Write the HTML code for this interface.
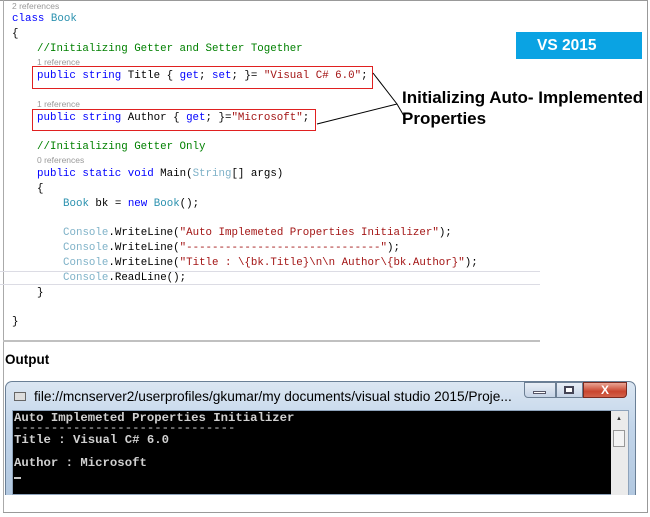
<!DOCTYPE html>
<html><head><meta charset="utf-8"><style>
*{margin:0;padding:0;box-sizing:border-box}
body{width:650px;height:517px;background:#fff;position:relative;overflow:hidden;font-family:"Liberation Sans",sans-serif}
.c{position:absolute;font-family:"Liberation Mono",monospace;font-size:10.8px;white-space:pre;color:#000;line-height:13px}
.r{position:absolute;font-family:"Liberation Sans",sans-serif;font-size:8.5px;color:#999;white-space:pre}
.k{color:#0000ff}.t{color:#2b91af}.s{color:#a31515}.g{color:#008000}.lt{color:#7fb2c8}
.box{position:absolute;border:1.5px solid #e02020}
.con{position:absolute;font-family:"Liberation Mono",monospace;font-size:12.3px;color:#d0d0d0;white-space:pre;line-height:12px;font-weight:bold}
</style></head><body>
<div style="position:absolute;left:0;top:0;width:648px;height:1px;background:#999"></div>
<div style="position:absolute;left:647px;top:0;width:1px;height:513px;background:#999"></div>
<div style="position:absolute;left:3px;top:0;width:1px;height:513px;background:#aaa"></div>
<div style="position:absolute;left:3px;top:512px;width:645px;height:1px;background:#999"></div>
<div style="position:absolute;left:0;top:271px;width:540px;height:1px;background:#dcdce4"></div>
<div style="position:absolute;left:0;top:284px;width:540px;height:1px;background:#dcdce4"></div>
<div style="position:absolute;left:3px;top:340px;width:537px;height:2px;background:#c0c0c0"></div>

<div class="r" style="left:12px;top:1px">2 references</div>
<div class="c" style="left:12px;top:13px"><span class="k">class</span> <span class="t">Book</span></div>
<div class="c" style="left:12px;top:28px">{</div>
<div class="c g" style="left:37px;top:43px">//Initializing Getter and Setter Together</div>
<div class="r" style="left:37px;top:57px">1 reference</div>
<div class="c" style="left:37px;top:70px"><span class="k">public</span> <span class="k">string</span> Title { <span class="k">get</span>; <span class="k">set</span>; }= <span class="s">"Visual C# 6.0"</span>;</div>
<div class="r" style="left:37px;top:99px">1 reference</div>
<div class="c" style="left:37px;top:112px"><span class="k">public</span> <span class="k">string</span> Author { <span class="k">get</span>; }=<span class="s">"Microsoft"</span>;</div>
<div class="c g" style="left:37px;top:141px">//Initializing Getter Only</div>
<div class="r" style="left:37px;top:155px">0 references</div>
<div class="c" style="left:37px;top:168px"><span class="k">public</span> <span class="k">static</span> <span class="k">void</span> Main(<span class="lt">String</span>[] args)</div>
<div class="c" style="left:37px;top:183px">{</div>
<div class="c" style="left:63px;top:198px"><span class="t">Book</span> bk = <span class="k">new</span> <span class="t">Book</span>();</div>
<div class="c" style="left:63px;top:227px"><span class="lt">Console</span>.WriteLine(<span class="s">"Auto Implemeted Properties Initializer"</span>);</div>
<div class="c" style="left:63px;top:242px"><span class="lt">Console</span>.WriteLine(<span class="s">"------------------------------"</span>);</div>
<div class="c" style="left:63px;top:257px"><span class="lt">Console</span>.WriteLine(<span class="s">"Title : \{bk.Title}\n\n Author\{bk.Author}"</span>);</div>
<div class="c" style="left:63px;top:272px"><span class="lt">Console</span>.ReadLine();</div>
<div class="c" style="left:37px;top:287px">}</div>
<div class="c" style="left:12px;top:316px">}</div>

<div class="box" style="left:32px;top:66px;width:341px;height:23px"></div>
<div class="box" style="left:32px;top:109px;width:284px;height:22px"></div>
<svg style="position:absolute;left:0;top:0" width="650" height="517"><polyline points="373,73 397,104 404,116" fill="none" stroke="#000" stroke-width="1"/><line x1="317" y1="124" x2="397" y2="104" stroke="#000" stroke-width="1"/></svg>

<div style="position:absolute;left:516px;top:32px;width:126px;height:27px;background:#0aa3e3;color:#fff;font-weight:bold;font-size:15.5px;line-height:27px;padding-left:21px">VS 2015</div>
<div style="position:absolute;left:402px;top:87px;font-weight:bold;font-size:17px;line-height:21px;color:#000;white-space:nowrap">Initializing Auto- Implemented<br>Properties</div>

<div style="position:absolute;left:5px;top:352px;font-weight:bold;font-size:13.5px">Output</div>

<div style="position:absolute;left:5px;top:381px;width:631px;height:114px;border:1px solid #6a7f96;border-bottom:none;border-radius:7px 7px 0 0;background:linear-gradient(#dbe6f2,#c2d5ea 40%,#b2c8e0)"></div>
<div style="position:absolute;left:14px;top:392px;width:12px;height:9px;background:#ddd;border:1px solid #666"></div>
<div style="position:absolute;left:34px;top:389px;font-size:13.7px;color:#000;white-space:pre">file://mcnserver2/userprofiles/gkumar/my documents/visual studio 2015/Proje...</div>
<div style="position:absolute;left:524px;top:382px;width:32px;height:16px;border:1px solid #6c7f94;border-radius:0 0 0 4px;background:linear-gradient(#e8eef6,#c6d4e6)"></div>
<div style="position:absolute;left:533px;top:391px;width:13px;height:3px;background:#fff;border:1px solid #556"></div>
<div style="position:absolute;left:556px;top:382px;width:27px;height:16px;border:1px solid #6c7f94;background:linear-gradient(#e8eef6,#c6d4e6)"></div>
<div style="position:absolute;left:564px;top:386px;width:10px;height:8px;border:2px solid #445;background:#fff"></div>
<div style="position:absolute;left:583px;top:382px;width:44px;height:16px;border:1px solid #7a2a20;border-radius:0 0 4px 0;background:linear-gradient(#e9a595,#c9452f 60%,#d2614a);color:#fff;font-weight:bold;font-size:12px;text-align:center;line-height:14px">X</div>
<div style="position:absolute;left:12px;top:410px;width:617px;height:85px;border:1px solid #8ea3bb;background:#000"></div>
<div style="position:absolute;left:611px;top:411px;width:17px;height:84px;background:#ebebeb"></div>
<div style="position:absolute;left:613px;top:430px;width:12px;height:17px;background:#f4f4f4;border:1px solid #999"></div>
<div style="position:absolute;left:616px;top:416px;font-size:6px;color:#333">▲</div>
<div class="con" style="left:14px;top:412px">Auto Implemeted Properties Initializer</div>
<div class="con" style="left:14px;top:422px;font-weight:normal">------------------------------</div>
<div class="con" style="left:14px;top:434px">Title : Visual C# 6.0</div>
<div class="con" style="left:14px;top:457px">Author : Microsoft</div>
<div style="position:absolute;left:14px;top:477px;width:7px;height:2px;background:#c8c8c8"></div>
</body></html>
